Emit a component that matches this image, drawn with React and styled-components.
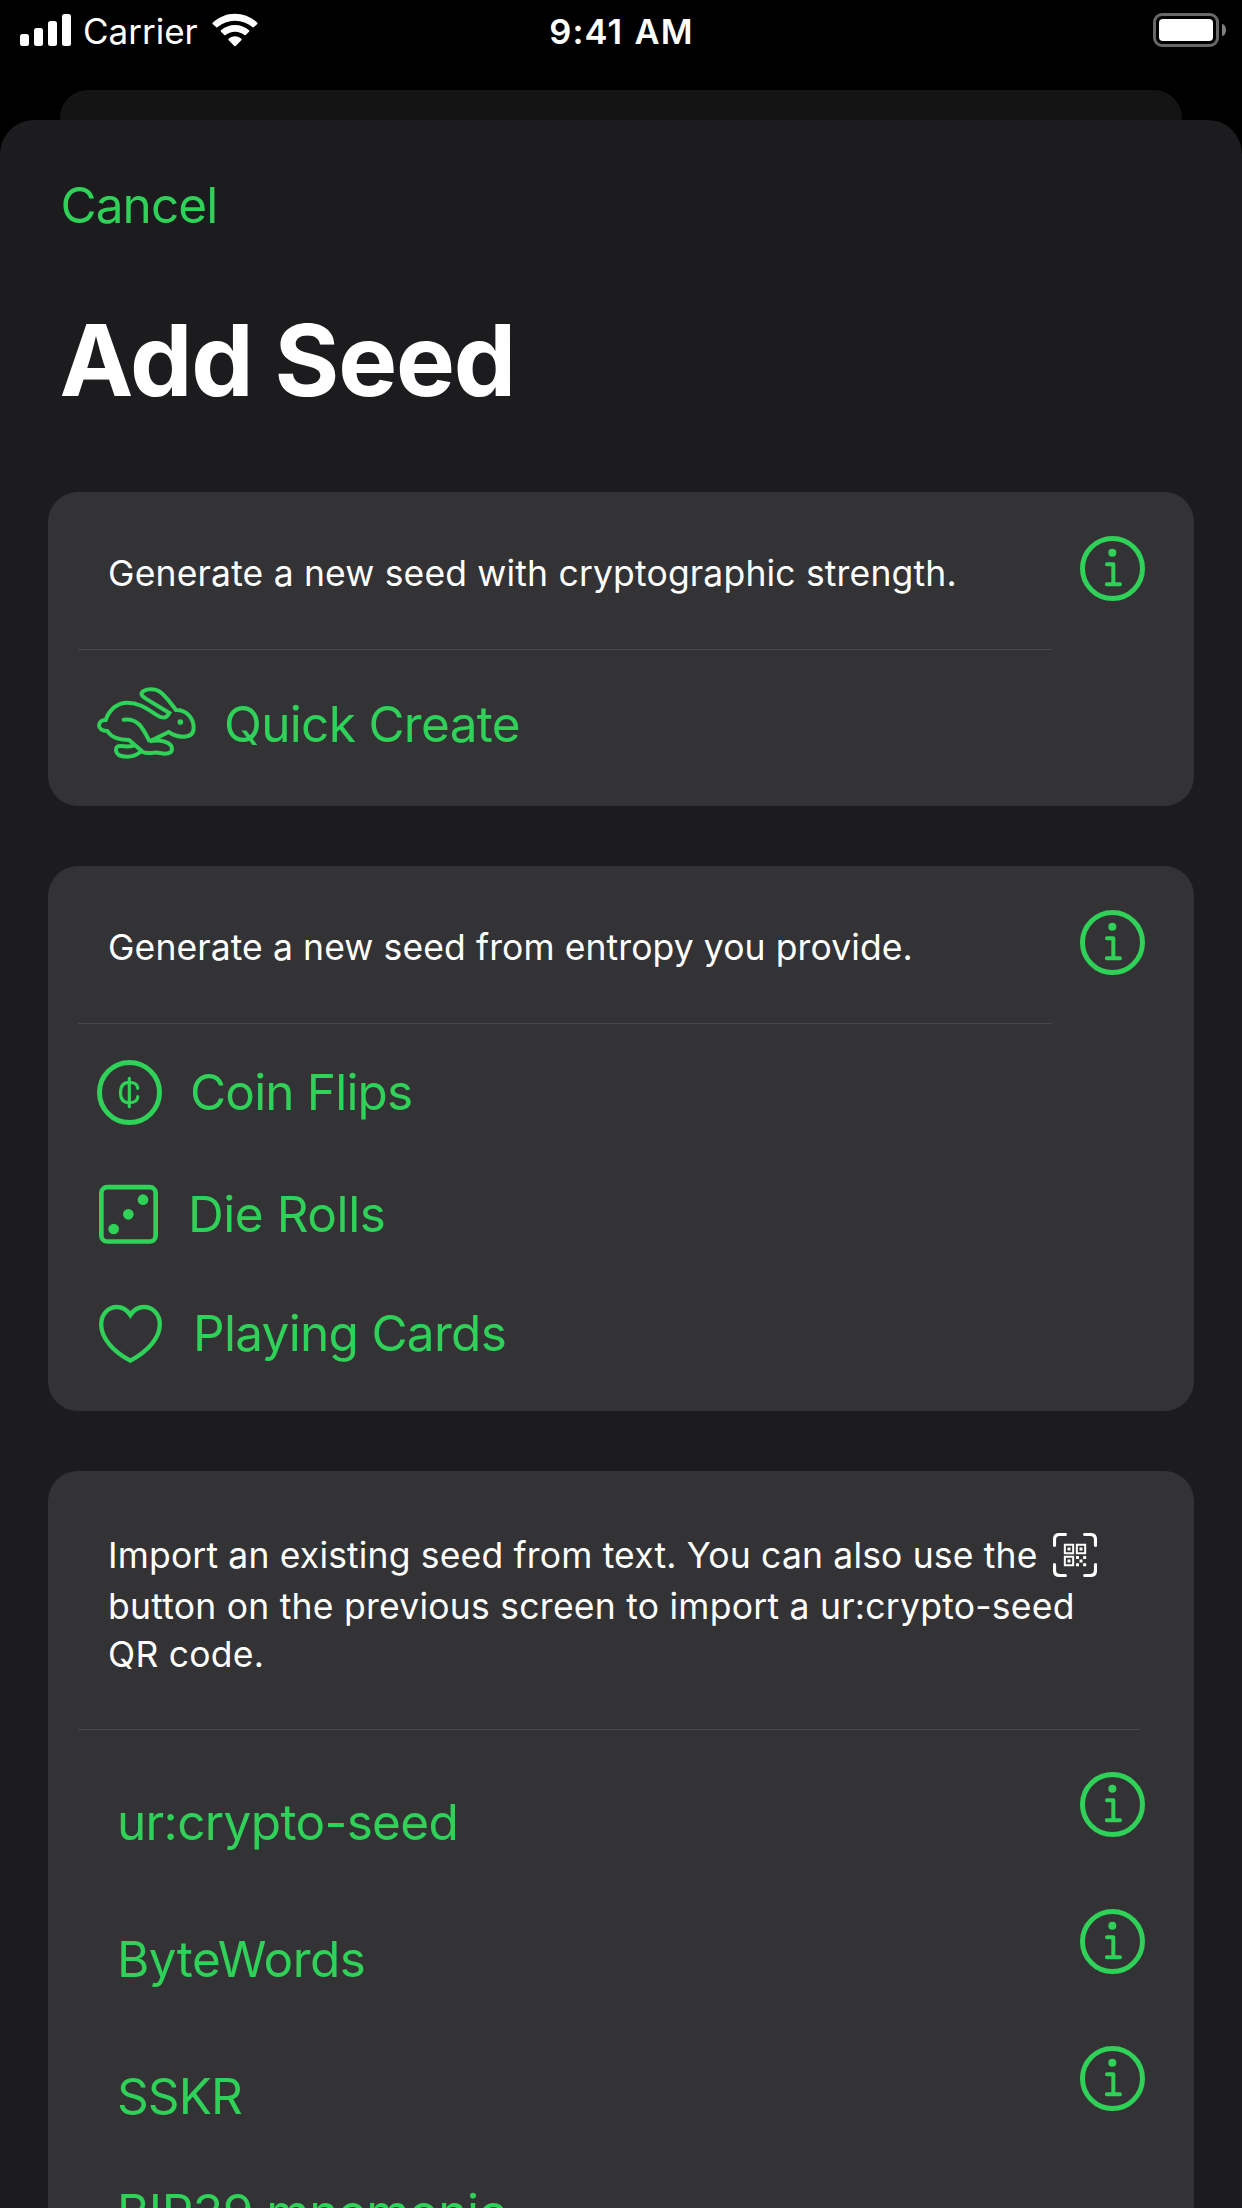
import React from "react";
import styled, { createGlobalStyle } from "styled-components";

const GREEN = "#30d158";

const GlobalStyle = createGlobalStyle`
  *, *::before, *::after { box-sizing: border-box; }
  html, body { margin: 0; padding: 0; background: #000; }
  body { font-family: Inter, "Liberation Sans", sans-serif; }
  button { font: inherit; color: inherit; background: none; border: 0; padding: 0; margin: 0; text-align: left; }
  svg { display: block; flex: none; }
`;

const Screen = styled.main`
  display: flex;
  flex-direction: column;
  width: 1242px;
  height: 2208px;
  overflow: hidden;
  background: #000;
  color: #fff;
`;

const StatusBar = styled.header`
  flex: none;
  display: grid;
  grid-template-columns: 1fr auto 1fr;
  height: 90px;
  padding: 0 16px 30px 20px;
  align-items: center;
`;

const StatusLeft = styled.div`
  display: flex;
  align-items: center;
  gap: 12px;
`;

const SignalBars = styled.div`
  display: flex;
  align-items: flex-end;
  gap: 5px;
`;

const SignalBar = styled.span`
  width: 9px;
  height: ${(p) => p.$height}px;
  border-radius: 2.5px;
  background: #fff;
`;

const Carrier = styled.span`
  padding-top: 2px;
  font-size: 35px;
  line-height: 44px;
`;

const WifiSlot = styled.span`
  display: flex;
  padding: 0 0 1px 2px;
`;

const Clock = styled.time`
  padding: 3px 3px 0 0;
  font-size: 34.5px;
  font-weight: 600;
  line-height: 44px;
  letter-spacing: 1.1px;
  word-spacing: 1.5px;
`;

const Battery = styled.div`
  justify-self: end;
  display: flex;
  align-items: center;
  gap: 3px;
`;

const BatteryShell = styled.span`
  width: 66px;
  height: 34px;
  padding: 3px;
  border: 3px solid #686868;
  border-radius: 9px;
`;

const BatteryCharge = styled.span`
  display: block;
  height: 100%;
  border-radius: 4px;
  background: #fff;
`;

const BatteryNub = styled.span`
  width: 4px;
  height: 12px;
  border-radius: 0 4px 4px 0 / 0 6px 6px 0;
  background: #808080;
`;

const BackSheet = styled.div`
  flex: none;
  height: 30px;
  margin: 0 60px;
  border-radius: 28px 28px 0 0;
  background: #141414;
`;

const Sheet = styled.section`
  flex: 1;
  display: flex;
  flex-direction: column;
  align-items: stretch;
  padding: 55px 48px 0;
  border-radius: 34px 34px 0 0;
  background: #1c1c1e;
  min-height: 0;
`;

const CancelButton = styled.button`
  align-self: flex-start;
  margin-left: 12.5px;
  color: ${GREEN};
  font-size: 49.5px;
  line-height: 60px;
  letter-spacing: -0.94px;
`;

const Title = styled.h1`
  margin: 65px 0 72px 11.5px;
  font-size: 99px;
  font-weight: 700;
  line-height: 120px;
  letter-spacing: -1.2px;
`;

const CardStack = styled.div`
  display: flex;
  flex-direction: column;
  gap: 60px;
`;

const Card = styled.article`
  flex: none;
  display: flex;
  flex-direction: column;
  border-radius: 30px;
  padding-bottom: ${(p) => p.$bottom}px;
  background: #333335;
`;

const CardHeader = styled.div`
  display: flex;
  justify-content: space-between;
  align-items: flex-start;
  height: ${(p) => p.$height}px;
  padding: 44px 49px 0 60px;
`;

const Description = styled.p`
  margin: ${(p) => p.$top}px 0 0;
  max-width: 1022px;
  font-size: 35.5px;
  line-height: 48px;
  letter-spacing: ${(p) => p.$tracking}px;
`;

const Sentence = styled.span`
  letter-spacing: ${(p) => p.$tracking}px;
`;

const InlineIcon = styled.span`
  display: inline-block;
  margin: 0 0 6px 5px;
  vertical-align: -15px;
`;

const Divider = styled.hr`
  width: ${(p) => p.$width}px;
  height: 1px;
  margin: 0 0 0 30px;
  border: 0;
  background: #48484a;
`;

const ActionList = styled.div`
  display: flex;
  flex-direction: column;
  padding-top: ${(p) => p.$top}px;
`;

const Action = styled.button`
  display: flex;
  align-items: center;
  gap: 28px;
  height: ${(p) => p.$height}px;
  padding-left: 49px;
  color: ${GREEN};
`;

const Label = styled.span`
  font-size: 49.5px;
  line-height: 60px;
  letter-spacing: ${(p) => p.$tracking}px;
  white-space: nowrap;
`;

const RabbitSlot = styled.span`
  display: flex;
  padding-bottom: 3px;
`;

const ImportRow = styled.div`
  display: flex;
  justify-content: space-between;
  align-items: center;
  height: ${(p) => p.$height}px;
  padding: 0 49px 0 69px;
  color: ${GREEN};
`;

const InfoButton = styled.button`
  display: flex;
  color: ${GREEN};
  padding-bottom: ${(p) => p.$lift || 0}px;
`;

const InfoIcon = () => (
  <svg width="65" height="65" viewBox="0 0 195 195" fill="none" stroke="currentColor" strokeLinecap="round" strokeLinejoin="round">
    <circle cx="97.5" cy="97.5" r="90" strokeWidth="15" />
    <circle cx="97" cy="50.5" r="12" fill="currentColor" stroke="none" />
    <path d="M81 84.5H100V145M80.5 145H120" strokeWidth="12" />
  </svg>
);

const WifiIcon = () => (
  <svg width="46" height="34" viewBox="0 0 138 102" fill="#fff">
    <path d="M69 2C94 2 118 12 136 29C137 30 137 32 136 33L125 43C124 44 123 44 122 43C107 30 89 23 69 23C49 23 31 30 16 43C15 44 14 44 13 43L2 33C1 32 1 30 2 29C20 12 44 2 69 2Z" />
    <path d="M69 36C85 36 100 42 111 52C112.500 53 112.500 55 111 56L101 66C100 67 98.500 67 97.500 66C90 60 80 56 69 56C58 56 48 60 40.500 66C39.500 67 38 67 37 66L27 56C25.500 55 25.500 53 27 52C38 42 53 36 69 36Z" />
    <path d="M69 70C77 70 83 73 88 77C89.500 78.500 89.500 80 88 81.500L71 99C70 100.300 68 100.300 67 99L50 81.500C48.500 80 48.500 78.500 50 77C55 73 61 70 69 70Z" />
  </svg>
);

const RabbitIcon = () => (
  <svg width="99" height="72" viewBox="171 169 297 216" fill="none" stroke="currentColor" strokeWidth="12" strokeLinejoin="miter" strokeLinecap="round">
    <path d="M197 268C208 236 232 216 262 216C296 216 318 232 347 251C361 260 371 263 378 259C383 256 385 252 388 247L321 206C303 195 300 188 311 181C322 174 344 174 356 181C376 193 391 216 408 238C439 237 461 262 461 292C461 311 450 318 429 318C413 318 399 313 386 304L329 332C364 325 396 336 396 355C396 367 386 369 374 369C360 368 352 364 340 366C326 368 318 369 309 364L267 328C238 328 213 319 202 301C186 301 177 293 177 284C177 275 185 267 197 268Z" />
    <path d="M251 267C294 262 308 291 327 329" />
    <path d="M287 342C270 353 254 346 240 346C230 346 227 352 228 360C230 373 242 378 260 378C280 378 293 372 303 362" strokeLinecap="butt" />
    <circle cx="421" cy="274" r="8.500" fill="currentColor" stroke="none" />
  </svg>
);

const QuickIcon = () => (
  <RabbitSlot>
    <RabbitIcon />
  </RabbitSlot>
);

const CoinIcon = () => (
  <svg width="65" height="65" viewBox="51 90 195 195" fill="none" stroke="currentColor" strokeLinecap="round">
    <circle cx="148.500" cy="187.500" r="90" strokeWidth="15" />
    <path d="M173 175C173 163 162 157 148 157C131 157 121.500 167 121.500 188C121.500 208 131 218 148 218C162 218 173 212 173 200M148 145V230" strokeWidth="9.500" />
  </svg>
);

const DieIcon = () => (
  <svg width="63" height="60" viewBox="51 463 189 180" fill="none" stroke="currentColor">
    <rect x="64" y="472.500" width="163" height="163" rx="18" strokeWidth="14" />
    <g fill="currentColor" stroke="none">
      <circle cx="189" cy="510" r="16" />
      <circle cx="145" cy="554" r="16" />
      <circle cx="101" cy="598" r="16" />
    </g>
  </svg>
);

const HeartIcon = () => (
  <svg width="68" height="60" viewBox="51 819 204 180" fill="none" stroke="currentColor" strokeWidth="13">
    <path d="M151 855C140 838 126 831 111 831C84 831 63.500 853 63.500 883C63.500 925 100 965 151 992C202 965 239.500 925 239.500 883C239.500 853 219 831 192 831C177 831 162 838 151 855Z" />
  </svg>
);

const QrScanIcon = () => (
  <svg width="44" height="44" viewBox="0 0 132 132" fill="none" stroke="#fff">
    <path d="M4.500 37V20Q4.500 4.500 20 4.500H37M95 4.500H112Q127.500 4.500 127.500 20V37M127.500 95V112Q127.500 127.500 112 127.500H95M37 127.500H20Q4.500 127.500 4.500 112V95" strokeWidth="9.500" strokeLinecap="round" />
    <path d="M35.500 35.500H60.500V60.500H35.500ZM71.500 35.500H96.500V60.500H71.500ZM35.500 71.500H60.500V96.500H35.500Z" strokeWidth="6" />
    <path d="M43.500 43.500h9v9h-9ZM79.500 43.500h9v9h-9ZM43.500 79.500h9v9h-9ZM69 69h9v9h-9ZM90.500 69h9v9h-9ZM79.500 79.500h9v9h-9ZM69 90.500h9v9h-9ZM90.500 90.500h9v9h-9Z" fill="#fff" stroke="none" />
  </svg>
);

const entropySources = [
  { name: "Coin Flips", Icon: CoinIcon, tracking: -0.83, height: 122 },
  { name: "Die Rolls", Icon: DieIcon, tracking: -0.45, height: 122 },
  { name: "Playing Cards", Icon: HeartIcon, tracking: -0.7, height: 116 },
];

const importFormats = [
  { name: "ur:crypto-seed", tracking: -0.65, height: 137, info: true },
  { name: "ByteWords", tracking: -0.54, height: 137, info: true },
  { name: "SSKR", tracking: -0.9, height: 137, info: true },
  { name: "BIP39 mnemonic", tracking: -0.52, height: 96, info: false },
];

export default function App() {
  return (
    <>
      <GlobalStyle />
      <Screen>
        <StatusBar>
          <StatusLeft>
            <SignalBars>
              {[12, 18, 25, 32].map((h) => (
                <SignalBar key={h} $height={h} />
              ))}
            </SignalBars>
            <Carrier>Carrier</Carrier>
            <WifiSlot>
              <WifiIcon />
            </WifiSlot>
          </StatusLeft>
          <Clock>9:41 AM</Clock>
          <Battery>
            <BatteryShell>
              <BatteryCharge />
            </BatteryShell>
            <BatteryNub />
          </Battery>
        </StatusBar>
        <BackSheet />
        <Sheet>
          <CancelButton>Cancel</CancelButton>
          <Title>Add Seed</Title>
          <CardStack>
            <Card $bottom={32}>
              <CardHeader $height={157}>
                <Description $top={14} $tracking={0.17}>
                  Generate a new seed with cryptographic strength.
                </Description>
                <InfoButton aria-label="Info">
                  <InfoIcon />
                </InfoButton>
              </CardHeader>
              <Divider $width={974} />
              <ActionList $top={24}>
                <Action $height={100}>
                  <QuickIcon />
                  <Label $tracking={-0.68}>Quick Create</Label>
                </Action>
              </ActionList>
            </Card>

            <Card $bottom={20}>
              <CardHeader $height={157}>
                <Description $top={14} $tracking={0.1}>
                  Generate a new seed from entropy you provide.
                </Description>
                <InfoButton aria-label="Info">
                  <InfoIcon />
                </InfoButton>
              </CardHeader>
              <Divider $width={974} />
              <ActionList $top={7}>
                {entropySources.map(({ name, Icon, tracking, height }) => (
                  <Action key={name} $height={height}>
                    <Icon />
                    <Label $tracking={tracking}>{name}</Label>
                  </Action>
                ))}
              </ActionList>
            </Card>

            <Card $bottom={40}>
              <CardHeader $height={258}>
                <Description $top={17} $tracking={0.25}>
                  <Sentence $tracking={0.17}>
                    Import an existing seed from text. You can also use the{" "}
                  </Sentence>
                  <InlineIcon>
                    <QrScanIcon />
                  </InlineIcon>{" "}
                  button on the previous screen to import a ur:crypto-seed QR code.
                </Description>
              </CardHeader>
              <Divider $width={1062} />
              <ActionList $top={23}>
                {importFormats.map(({ name, tracking, height, info }) => (
                  <ImportRow key={name} $height={height}>
                    <Label $tracking={tracking}>{name}</Label>
                    {info && (
                      <InfoButton aria-label="Info" $lift={34}>
                        <InfoIcon />
                      </InfoButton>
                    )}
                  </ImportRow>
                ))}
              </ActionList>
            </Card>
          </CardStack>
        </Sheet>
      </Screen>
    </>
  );
}
